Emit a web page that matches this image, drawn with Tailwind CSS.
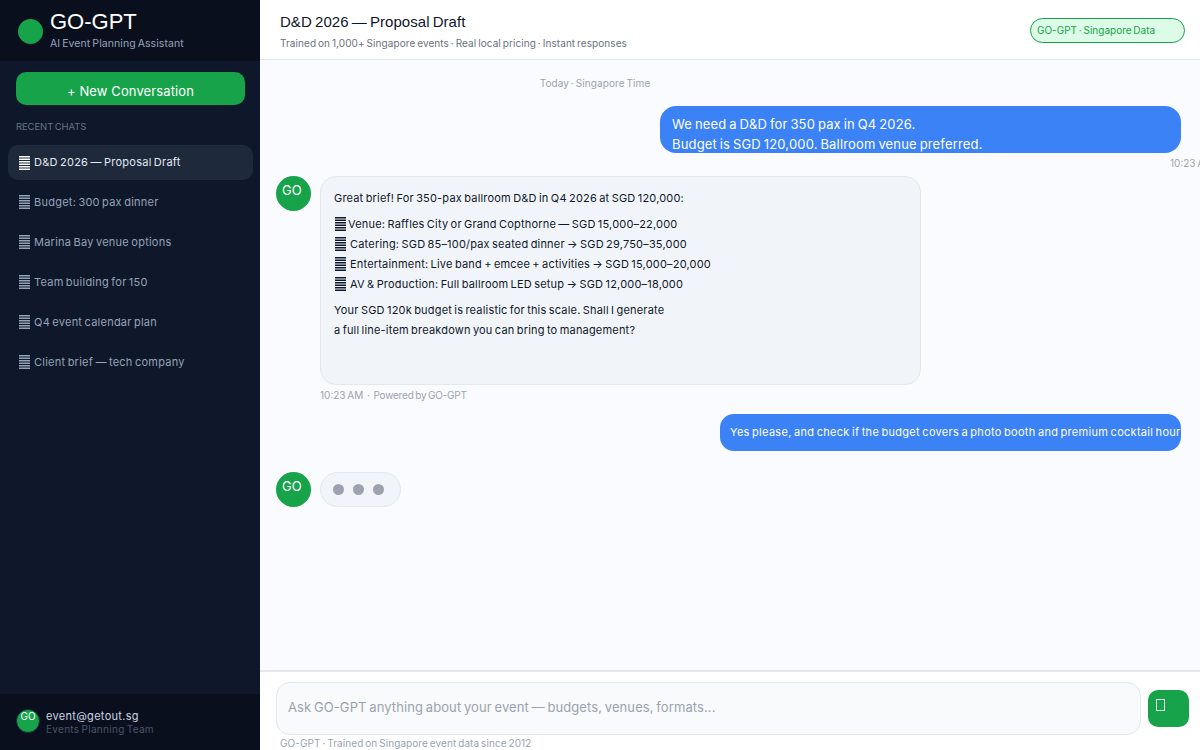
<!DOCTYPE html>
<html lang="en">

<head>
  <meta charset="UTF-8">
  <title>GO-GPT</title>
  <script src="https://cdn.jsdelivr.net/npm/@tailwindcss/browser@4"></script>
</head>

<body class="w-[1200px] h-[750px] overflow-hidden flex font-['Inter',sans-serif] [word-spacing:-1px] bg-white">

  <!-- Sidebar -->
  <aside class="w-[260px] h-[750px] shrink-0 flex flex-col bg-[#0f172a]">
    <div class="h-[61px] shrink-0 flex items-center gap-[7px] pl-[18px] bg-[#0a0f1e]">
      <div class="w-[25px] h-[25px] rounded-full bg-[#16a34a] mt-[2px]"></div>
      <div>
        <div class="font-['Liberation_Sans',sans-serif] text-[22px] leading-[24px] text-white">GO-GPT</div>
        <div class="text-[10.5px] leading-[14px] mt-[3px] tracking-[0.07px] text-[#94a3b8]">AI Event Planning Assistant</div>
      </div>
    </div>
    <button class="ml-4 mr-[15px] mt-[11px] h-[33px] pt-[7px] shrink-0 rounded-[10px] bg-[#16a34a] text-white text-[13px] tracking-[0.12px]">+ New Conversation</button>
    <div class="ml-4 mt-[16px] text-[9.5px] leading-[12px] tracking-[-0.1px] text-[#64748b]">RECENT CHATS</div>
    <nav class="ml-2 mr-[7px] mt-[12px] flex flex-col gap-1 text-[11px] tracking-[0.24px] text-[#94a3b8]">
      <div class="h-[35px] flex items-center gap-[4px] pl-[10px] rounded-[10px] bg-[#1e293b] text-[#e2e8f0]">
        <svg width="12" height="14" viewBox="0 0 12 14" fill="#fff"><path d="M1 0h11v1.5H1zM1 2.5h11V4H1zM1 5h11v1.5H1zM1 7.5h11V9H1zM1 10h11v1.5H1zM1 12.5h11V14H1z"/></svg>
        D&amp;D 2026 — Proposal Draft
      </div>
      <div class="h-[36px] flex items-center gap-[4px] pl-[10px]">
        <svg width="12" height="14" viewBox="0 0 12 14" fill="#94a3b8"><path d="M1 0h11v1.5H1zM1 2.5h11V4H1zM1 5h11v1.5H1zM1 7.5h11V9H1zM1 10h11v1.5H1zM1 12.5h11V14H1z"/></svg>
        Budget: 300 pax dinner
      </div>
      <div class="h-[36px] flex items-center gap-[4px] pl-[10px]">
        <svg width="12" height="14" viewBox="0 0 12 14" fill="#94a3b8"><path d="M1 0h11v1.5H1zM1 2.5h11V4H1zM1 5h11v1.5H1zM1 7.5h11V9H1zM1 10h11v1.5H1zM1 12.5h11V14H1z"/></svg>
        Marina Bay venue options
      </div>
      <div class="h-[36px] flex items-center gap-[4px] pl-[10px]">
        <svg width="12" height="14" viewBox="0 0 12 14" fill="#94a3b8"><path d="M1 0h11v1.5H1zM1 2.5h11V4H1zM1 5h11v1.5H1zM1 7.5h11V9H1zM1 10h11v1.5H1zM1 12.5h11V14H1z"/></svg>
        Team building for 150
      </div>
      <div class="h-[36px] flex items-center gap-[4px] pl-[10px]">
        <svg width="12" height="14" viewBox="0 0 12 14" fill="#94a3b8"><path d="M1 0h11v1.5H1zM1 2.5h11V4H1zM1 5h11v1.5H1zM1 7.5h11V9H1zM1 10h11v1.5H1zM1 12.5h11V14H1z"/></svg>
        Q4 event calendar plan
      </div>
      <div class="h-[36px] flex items-center gap-[4px] pl-[10px]">
        <svg width="12" height="14" viewBox="0 0 12 14" fill="#94a3b8"><path d="M1 0h11v1.5H1zM1 2.5h11V4H1zM1 5h11v1.5H1zM1 7.5h11V9H1zM1 10h11v1.5H1zM1 12.5h11V14H1z"/></svg>
        Client brief — tech company
      </div>
    </nav>
    <div class="mt-auto h-[56px] flex items-center gap-[6px] pl-4 bg-[#0a0f1e]">
      <div class="w-6 h-6 rounded-full bg-[#16a34a] border border-[#1e293b] text-white text-[10px] leading-[12px] text-center mb-[3px]">GO</div>
      <div>
        <div class="text-[11px] leading-[14px] tracking-[0.3px] text-[#cbd5e1]">event@getout.sg</div>
        <div class="text-[10px] leading-[13px] tracking-[0.3px] text-[#475569]">Events Planning Team</div>
      </div>
    </div>
  </aside>

  <!-- Main -->
  <main class="w-[940px] h-[750px] flex flex-col bg-[#fafbff]">
    <header class="h-[60px] shrink-0 flex justify-between items-start pl-5 pr-[15px] bg-white border-b border-[#e2e8f0]">
      <div class="pt-[13px]">
        <div class="font-['Liberation_Sans',sans-serif] text-[15px] leading-[18px] tracking-[0.04px] text-[#0f172a]">D&amp;D 2026 — Proposal Draft</div>
        <div class="text-[10px] leading-[13px] mt-[6px] tracking-[0.08px] text-[#6b7280]">Trained on 1,000+ Singapore events · Real local pricing · Instant responses</div>
      </div>
      <div class="w-[155px] h-[25px] mt-[18px] flex items-center pl-[6px] rounded-full bg-[#dcfce7] border border-[#16a34a] text-[10px] text-[#16a34a]">GO-GPT · Singapore Data</div>
    </header>

    <section class="flex-1 min-h-0 overflow-hidden pl-4 relative">
      <div class="w-[638px] text-center text-[10px] leading-[13px] mt-[17px] tracking-[0.09px] text-[#9ca3af]">Today · Singapore Time</div>

      <div class="w-[905px] flex justify-end mt-[16px]">
        <div class="w-[521px] h-[47px] pl-3 pt-[8px] rounded-[16px] bg-[#3b82f6] text-white text-[13px] leading-[20px] tracking-[0.17px]">We need a D&amp;D for 350 pax in Q4 2026.<br>Budget is SGD 120,000. Ballroom venue preferred.</div>
      </div>
      <div class="w-[924px] h-[13px] mt-[4px] pl-[894px] text-[10px] leading-[13px] text-[#9ca3af] whitespace-nowrap overflow-hidden">10:23 AM</div>

      <div class="flex gap-[9px] mt-[6px]">
        <div class="w-[35px] h-[35px] rounded-full bg-[#16a34a] text-white text-[13px] leading-[16px] pl-[6px] pt-[6px]">GO</div>
        <div>
          <div class="w-[601px] h-[209px] pl-[13px] pt-[11px] rounded-[16px] bg-[#f1f5f9] border border-[#e2e8f0] text-[11px] leading-[20px] tracking-[0.19px] text-[#0f172a]">
            <p>Great brief! For 350-pax ballroom D&amp;D in Q4 2026 at SGD 120,000:</p>
            <ul class="mt-[6px]">
              <li class="flex items-center gap-[2px]"><svg width="12" height="14" viewBox="0 0 12 14" fill="#0f172a"><path d="M1 0h11v1.5H1zM1 2.5h11V4H1zM1 5h11v1.5H1zM1 7.5h11V9H1zM1 10h11v1.5H1zM1 12.5h11V14H1z"/></svg>Venue: Raffles City or Grand Copthorne — SGD 15,000–22,000</li>
              <li class="flex items-center gap-[4px]"><svg width="12" height="14" viewBox="0 0 12 14" fill="#0f172a"><path d="M1 0h11v1.5H1zM1 2.5h11V4H1zM1 5h11v1.5H1zM1 7.5h11V9H1zM1 10h11v1.5H1zM1 12.5h11V14H1z"/></svg>Catering: SGD 85–100/pax seated dinner → SGD 29,750–35,000</li>
              <li class="flex items-center gap-[4px]"><svg width="12" height="14" viewBox="0 0 12 14" fill="#0f172a"><path d="M1 0h11v1.5H1zM1 2.5h11V4H1zM1 5h11v1.5H1zM1 7.5h11V9H1zM1 10h11v1.5H1zM1 12.5h11V14H1z"/></svg>Entertainment: Live band + emcee + activities → SGD 15,000–20,000</li>
              <li class="flex items-center gap-[4px]"><svg width="12" height="14" viewBox="0 0 12 14" fill="#0f172a"><path d="M1 0h11v1.5H1zM1 2.5h11V4H1zM1 5h11v1.5H1zM1 7.5h11V9H1zM1 10h11v1.5H1zM1 12.5h11V14H1z"/></svg>AV &amp; Production: Full ballroom LED setup → SGD 12,000–18,000</li>
            </ul>
            <p class="mt-[6px]">Your SGD 120k budget is realistic for this scale. Shall I generate<br>a full line-item breakdown you can bring to management?</p>
          </div>
          <div class="mt-[4px] text-[10px] leading-[13px] text-[#9ca3af]">10:23 AM &nbsp;·&nbsp; <span class="tracking-[-0.2px]">Powered by GO-GPT</span></div>
        </div>
      </div>

      <div class="w-[905px] flex justify-end mt-[12px]">
        <div class="w-[461px] h-[37px] pl-[10px] flex items-center rounded-[14px] bg-[#3b82f6] text-white text-[11px] tracking-[0.29px] whitespace-nowrap overflow-hidden">Yes please, and check if the budget covers a photo booth and premium cocktail hour</div>
      </div>

      <div class="flex gap-[9px] mt-[21px]">
        <div class="w-[35px] h-[35px] rounded-full bg-[#16a34a] text-white text-[13px] leading-[16px] pl-[6px] pt-[6px]">GO</div>
        <div class="w-[81px] h-[35px] flex items-center gap-[9px] pl-[12px] rounded-full bg-[#f1f5f9] border border-[#e2e8f0]">
          <span class="w-[11px] h-[11px] rounded-full bg-[#9ca3af]"></span>
          <span class="w-[11px] h-[11px] rounded-full bg-[#9ca3af]"></span>
          <span class="w-[11px] h-[11px] rounded-full bg-[#9ca3af]"></span>
        </div>
      </div>
    </section>

    <footer class="h-[80px] shrink-0 bg-white border-t-2 border-[#e5e7eb] pl-4">
      <div class="flex items-start gap-[7px] mt-[10px]">
        <div class="w-[865px] h-[53px] flex items-center pl-[11px] pb-[2px] rounded-[14px] bg-[#f8fafc] border border-[#e2e8f0] text-[13px] tracking-[0.09px] text-[#9ca3af]">Ask GO-GPT anything about your event — budgets, venues, formats...</div>
        <div class="w-[41px] h-[37px] mt-[8px] pl-[8px] pt-[9px] rounded-[10px] bg-[#16a34a]"><div class="w-[9px] h-[12px] border border-[#dcfce7]"></div></div>
      </div>
      <div class="ml-1 mt-[2px] text-[10px] leading-[13px] tracking-[0.08px] text-[#9ca3af]">GO-GPT · Trained on Singapore event data since 2012</div>
    </footer>
  </main>

</body>

</html>
